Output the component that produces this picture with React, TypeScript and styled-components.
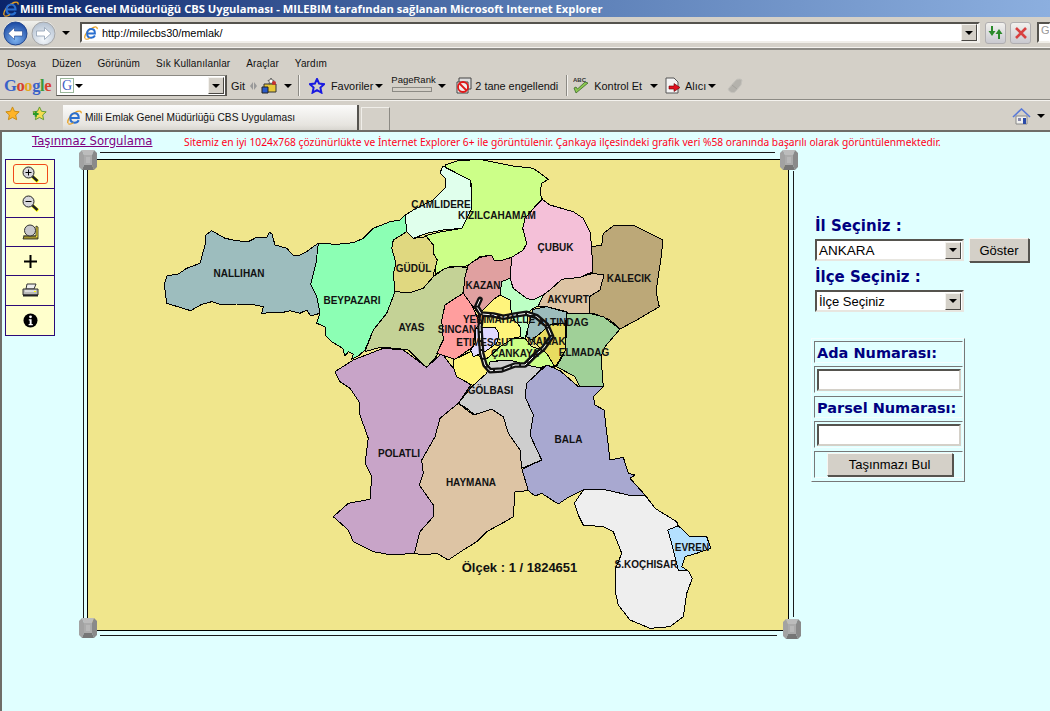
import React from "react";
import styled, { createGlobalStyle } from "styled-components";

const Global = createGlobalStyle`
  html, body { margin: 0; padding: 0; height: 100%; overflow: hidden; background: #d4d0c8; }
  #root { height: 100%; }
  * { box-sizing: border-box; }
`;

const Screen = styled.div`
  width: 1050px; height: 711px; display: flex; flex-direction: column; overflow: hidden;
  font-family: "Liberation Sans", Arial, sans-serif; background: #d4d0c8;
`;
const TitleBar = styled.div`
  height: 17px; display: flex; align-items: center; gap: 1px; padding-left: 3px; flex: none;
  background: linear-gradient(90deg, #0a246a 0%, #5a7db5 52%, #8cafdf 100%);
  color: #fff; font: bold 11.2px "Open Sans", sans-serif; white-space: nowrap;
`;
const AddressRow = styled.div`
  height: 33px; flex: none; display: flex; align-items: center; padding: 0 0 0 3px;
  border-bottom: 2px solid #8c8a84; box-shadow: inset 0 -1px 0 #f4f2ee;
`;
const NavGroup = styled.div`
  width: 53px; height: 25px; margin-top: 2px; flex: none; display: flex; align-items: center; justify-content: space-between;
  border-radius: 13px; background: linear-gradient(#f0f0ec, #c4c2bc);
`;
const Caret = styled.span<{ $ml?: number; $color?: string }>`
  display: inline-block; flex: none; width: 0; height: 0; margin-left: ${p => p.$ml ?? 0}px;
  border-left: 4px solid transparent; border-right: 4px solid transparent;
  border-top: 4px solid ${p => p.$color ?? "#000"};
`;
const AddressBox = styled.div`
  width: 900px; height: 21px; margin-left: 10px; display: flex; align-items: center; flex: none;
  background: #fff; border: 2px solid; border-color: #55534e #f0eee9 #f0eee9 #55534e; padding-left: 2px;
  font-size: 10.9px; color: #000; position: relative;
`;
const AddressText = styled.span` margin-left: 4px; flex: 1; `;
const DropBtn = styled.span`
  width: 16px; height: 17px; flex: none; display: flex; align-items: center; justify-content: center;
  background: #d4d0c8; border: 1px solid; border-color: #f4f2ee #4a4844 #4a4844 #f4f2ee; margin-right: 1px;
`;
const GoBtn = styled.div<{ $ml: number }>`
  width: 21px; height: 22px; margin-left: ${p => p.$ml}px; flex: none; border-radius: 3px;
  display: flex; align-items: center; justify-content: center;
  background: linear-gradient(#f2f1ee, #c9c9d0); border: 1px solid #b0aeb0;
`;
const SearchStub = styled.div`
  width: 14px; height: 21px; margin-left: 6px; flex: none; background: #fff; overflow: hidden;
  border: 2px solid; border-color: #55534e transparent #f0eee9 #55534e; color: #999; font-size: 11px; padding-left: 2px;
`;
const MenuRow = styled.div`
  height: 20px; flex: none; display: flex; align-items: center; padding: 6px 0 0 7px; gap: 16px;
  font-size: 10px; color: #111; letter-spacing: .12px;
`;
const ToolbarRow = styled.div`
  height: 30px; flex: none; display: flex; align-items: center; padding: 2px 0 0 4px;
  font-size: 10.9px; color: #111; white-space: nowrap;
  border-bottom: 1px solid #8c8a84; box-shadow: 0 1px 0 #f4f2ee;
`;
const GoogleLogo = styled.span`
  font: bold 16.5px "Liberation Serif", serif; letter-spacing: -.4px; width: 52px; flex: none; margin-top: 1px;
`;
const GL = styled.span<{ $c: string }>` color: ${p => p.$c}; `;
const SearchCombo = styled.div`
  width: 171px; height: 21px; flex: none; background: #fff; display: flex; align-items: center; padding-left: 3px;
  border: 1px solid #8c8a84; border-right: 2px solid #55534e; border-bottom-color: #55534e;
`;
const GBox = styled.span`
  width: 14px; height: 15px; flex: none; border: 1px solid #9ab79a; color: #3f5fc4; margin-right: 1px;
  font: 14px/13px "Liberation Serif", serif; text-align: center;
`;
const SearchFill = styled.span` flex: 1; `;
const ToolItem = styled.span<{ $ml?: number; $w?: number }>`
  flex: none; display: inline-flex; align-items: center; margin-left: ${p => p.$ml ?? 0}px;
  ${p => (p.$w ? `width: ${p.$w}px;` : "")}
`;
const Divider = styled.span<{ $ml: number }>`
  width: 2px; height: 21px; flex: none; margin-left: ${p => p.$ml}px;
  border-left: 1px solid #8c8a84; border-right: 1px solid #f4f2ee;
`;
const PageRankBox = styled.span`
  width: 43px; margin-left: 8px; flex: none; display: flex; flex-direction: column; align-items: flex-start;
  font-size: 9.5px; line-height: 10px; margin-top: -5px;
`;
const RankBar = styled.span`
  width: 40px; height: 5px; margin: 2px 0 0 1px; border: 1px solid #8c8a84; background: #d4d0c8;
`;
const TabRow = styled.div`
  height: 30px; flex: none; display: flex; align-items: flex-end; padding-left: 5px; position: relative;
`;
const FavIcons = styled.div`
  width: 58px; height: 26px; flex: none; display: flex; align-items: flex-start; gap: 12px; padding-top: 2px;
`;
const Tab = styled.div`
  width: 296px; height: 25px; flex: none; display: flex; align-items: center; padding-left: 4px; gap: 3px;
  background: linear-gradient(#fbfbfa, #e6e4df 80%, #d8d6d0);
  border-right: 2px solid #55534e; font-size: 10.2px; color: #111; white-space: nowrap;
`;
const NewTab = styled.div`
  width: 29px; height: 23px; margin-left: 2px; flex: none; background: #d4d0c8;
  border: 1px solid #8c8a84; border-top-color: #f0eee9; border-left-color: #f0eee9; border-bottom: none;
`;
const TabTools = styled.div`
  margin-left: auto; height: 26px; display: flex; align-items: center; gap: 6px; padding: 0 5px 2px 0;
`;
const Page = styled.div`
  flex: 1; background: #e0ffff; border-left: 2px solid #6f6d68; border-top: 2px solid #6f6d68;
  display: flex; flex-direction: column; min-height: 0;
`;
const Header = styled.div`
  height: 27px; flex: none; display: flex; align-items: flex-start; padding: 2px 0 0 30px; white-space: nowrap;
`;
const QueryLink = styled.a`
  color: #800080; text-decoration: underline; font: 11.7px "DejaVu Sans", sans-serif; width: 152px; flex: none;
  cursor: pointer;
`;
const Notice = styled.span`
  color: #ff0020; font: 10.26px "Noto Sans", sans-serif; margin-top: 1px;
`;
const Workspace = styled.div` display: flex; align-items: flex-start; `;
const ToolPanel = styled.div`
  width: 50px; margin-left: 3px; flex: none; background: #ffffcc; border: 1px solid #2c0a78;
  display: flex; flex-direction: column;
`;
const ToolCell = styled.div<{ $h: number; $last?: boolean }>`
  height: ${p => p.$h}px; display: flex; align-items: center; justify-content: center;
  ${p => (p.$last ? "" : "border-bottom: 1px solid #2c0a78;")}
`;
const ActiveTool = styled.span`
  width: 35px; height: 20px; display: flex; align-items: center; justify-content: center;
  border: 1px solid #f04a18; border-radius: 3px;
`;
const MapFrame = styled.div`
  position: relative; margin-left: 32px; width: 702px; height: 472px; flex: none;
  background: #f0e68c; border: 1px solid #000;
`;
const MapCanvas = styled.svg` display: block; width: 700px; height: 470px; `;
const FrameLine = styled.span<{ $c: string }>`
  position: absolute; background: #1a1a1a; ${p => p.$c}
`;
const KnobWrap = styled.svg<{ $c: string }>` position: absolute; width: 18px; height: 20px; ${p => p.$c} `;
const SidePanel = styled.div`
  width: 220px; margin-left: 26px; flex: none; padding-top: 56px; display: flex; flex-direction: column;
  color: #000080;
`;
const PickTitle = styled.div`
  font: bold 15px "DejaVu Sans", sans-serif; height: 22px; line-height: 22px; white-space: nowrap;
`;
const PickRow = styled.div` display: flex; align-items: center; gap: 5px; height: 26px; margin-bottom: 3px; `;
const SelectBox = styled.div<{ $fs: number }>`
  width: 149px; height: 22px; flex: none; background: #fff; display: flex; align-items: center; justify-content: space-between;
  border: 2px solid; border-color: #55534e #e8e6e0 #e8e6e0 #55534e; padding-left: 2px;
  font: ${p => p.$fs}px "Liberation Sans", sans-serif; color: #000;
`;
const PlainBtn = styled.button<{ $w: number; $h: number }>`
  width: ${p => p.$w}px; height: ${p => p.$h}px; flex: none; padding: 0; background: #d4d0c8; color: #000;
  border: 1px solid; border-color: #f8f6f2 #55534e #55534e #f8f6f2; box-shadow: 1px 1px 0 #55534e;
  font: 13px "Liberation Sans", sans-serif;
`;
const ParcelTable = styled.div`
  width: 154px; height: 144px; margin: 21px 0 0 -4px; padding: 2px 1px 2px 2px; display: flex; flex-direction: column; gap: 3px;
  border: 1px solid; border-color: #f4fdfd #777 #777 #f4fdfd;
`;
const ParcelCell = styled.div<{ $h: number; $center?: boolean }>`
  height: ${p => p.$h}px; flex: none; display: flex; align-items: center; padding-left: 2px;
  ${p => (p.$center ? "justify-content: center;" : "")}
  border: 1px solid; border-color: #777 #f4fdfd #f4fdfd #777;
`;
const ParcelLabel = styled(ParcelCell)`
  padding-top: 2px; font: bold 14.5px "DejaVu Sans", sans-serif; white-space: nowrap;
`;
const ParcelInput = styled.input`
  width: 144px; height: 22px; padding: 0; background: #fff;
  border: 2px solid; border-color: #55534e #d4d0c8 #d4d0c8 #55534e;
`;

const at = (ox: number, oy: number, s: string) =>
  s.trim().split(/\s+/).map(p => {
    const [x, y] = p.split(",").map(Number);
    return `${(ox + x / 3).toFixed(1)},${(oy + y / 3).toFixed(1)}`;
  }).join(" ");

const Z5: [number, number] = [150, 150];
const Z6: [number, number] = [400, 150];
const Z7: [number, number] = [320, 340];

const regions: { f: string; o: [number, number]; p: string }[] = [
  { f: "#ccff88", o: Z6, p: "135,45 170,33 240,28 340,48 400,55 445,88 425,100 420,130 427,148 405,170 375,205 368,235 380,280 370,300 335,322 300,333 280,330 275,315 240,320 205,345 195,350 150,350 105,372 105,345 95,320 100,295 75,257 125,245 185,235 215,175 215,100 135,70" },
  { f: "#e0ffec", o: Z5, p: "766,195 790,180 850,150 888,110 885,85 870,70 878,48 960,90 966,130 965,175 935,235 880,240 830,250 790,265 770,245" },
  { f: "#9dbdbe", o: Z5, p: "505,280 490,290 470,305 450,315 430,316 410,295 375,285 365,250 358,248 350,262 320,262 295,275 260,272 225,265 185,242 168,255 165,285 150,340 110,355 85,372 50,378 43,405 50,460 122,482 155,463 185,455 215,465 260,462 300,462 340,470 335,490 360,488 395,488 420,482 450,490 470,480 482,498 510,490 510,440 482,403 498,340" },
  { f: "#8cffb4", o: Z5, p: "505,280 560,283 610,278 640,265 670,235 720,215 750,210 766,195 770,245 730,270 725,295 738,340 730,370 735,425 710,490 670,540 645,600 625,618 605,628 610,612 595,605 585,618 578,595 545,575 525,555 525,530 500,520 510,490 500,440 482,403 498,340" },
  { f: "#e0d880", o: Z5, p: "770,245 790,265 830,260 850,285 850,310 862,330 850,375 855,385 845,395 820,415 780,428 735,425 730,370 738,340 725,295 730,270" },
  { f: "#c4d296", o: Z5, p: "735,425 780,428 820,415 850,380 885,355 920,350 952,352 945,400 935,445 885,480 880,520 885,555 865,610 850,630 830,652 800,625 775,600 735,595 690,592 645,605 670,540 710,490" },
  { f: "#c8a4c8", o: Z7, p: "45,95 100,60 190,25 250,30 320,82 365,40 400,85 452,135 415,190 360,235 345,290 305,360 310,400 298,435 340,495 340,530 300,575 283,640 215,645 160,635 100,605 85,570 40,530 85,490 150,478 155,410 135,370 145,295 118,220 120,190 90,145 60,125" },
  { f: "#ff9e9e", o: Z6, p: "190,430 215,465 240,520 225,540 220,590 165,628 110,610 130,570 125,510 135,465 165,445" },
  { f: "#e0a0a0", o: Z6, p: "205,345 240,322 275,315 282,330 300,333 335,322 335,355 330,385 305,395 300,435 278,450 250,480 235,490 215,465 190,430 195,380" },
  { f: "#f4c0d8", o: Z6, p: "427,148 450,165 520,185 550,205 570,245 575,290 578,365 540,382 485,388 450,420 430,435 400,450 380,445 340,415 330,385 335,322 370,300 380,280 368,235 375,205 405,170" },
  { f: "#bca878", o: Z6, p: "605,285 610,250 640,228 700,225 788,270 785,310 768,425 778,470 710,510 660,537 630,510 580,490 568,490 568,440 600,420 610,375 578,370 575,290" },
  { f: "#ddc4a4", o: Z6, p: "485,388 540,382 578,370 612,375 600,420 568,440 568,490 520,503 500,485 440,470 415,468 430,435 450,420" },
  { f: "#bcffc4", o: Z6, p: "305,395 330,385 340,415 380,445 400,450 430,435 415,468 400,475 380,490 385,530 375,565 360,560 360,530 335,500 330,450 300,435" },
  { f: "#fff47c", o: Z6, p: "235,490 250,480 278,450 300,435 330,450 335,500 360,530 360,560 340,565 300,590 280,610 255,630 240,620 215,603 220,590 225,540 240,520" },
  { f: "#fff47c", o: Z6, p: "160,630 215,603 240,620 255,650 265,665 225,710 170,680 160,650" },
  { f: "#e0d8ff", o: Z6, p: "225,535 285,532 297,550 290,580 255,605 220,620 212,600 225,580" },
  { f: "#ccff88", o: Z6, p: "300,590 340,565 375,565 395,590 425,600 440,610 465,652 440,645 420,655 375,648 330,640 290,630 270,660 255,630 280,610" },
  { f: "#9cbcbc", o: Z6, p: "400,478 440,470 500,487 497,520 460,520 415,555 395,570 380,560 385,530" },
  { f: "#e8dc60", o: Z6, p: "415,555 450,525 497,520 497,600 465,652 440,610 425,600 395,570" },
  { f: "#a0d098", o: Z6, p: "500,490 568,490 610,500 660,537 615,590 603,620 610,710 540,712 525,680 470,650 497,600" },
  { f: "#cecece", o: Z7, p: "415,190 455,140 500,100 510,65 570,60 620,75 665,85 630,125 615,170 640,225 630,285 665,360 605,385 600,330 565,280 550,230 515,208 465,225 440,205" },
  { f: "#a8a8d0", o: Z7, p: "620,130 680,75 720,92 775,140 850,140 820,170 825,195 852,210 870,360 910,352 925,400 945,405 930,415 975,465 925,465 850,450 790,450 745,472 715,492 665,460 645,468 625,452 602,390 665,360 630,285 640,225 615,170" },
  { f: "#ddc4a4", o: Z7, p: "415,190 460,225 515,208 550,230 565,280 600,330 605,385 625,452 585,455 580,530 555,545 500,575 470,605 430,630 385,660 350,640 310,645 283,640 300,575 340,530 340,495 298,435 310,400 305,360 345,290 360,235" },
  { f: "#eeeeee", o: Z7, p: "790,450 850,448 925,465 975,465 1005,505 1070,545 1075,557 1043,570 1055,610 1075,690 1105,693 1117,715 1100,760 1090,830 1050,860 990,865 930,840 895,795 885,750 885,690 905,640 880,575 850,560 790,555 775,525 763,490" },
  { f: "#b4e0ff", o: Z7, p: "1075,557 1110,590 1160,590 1172,625 1130,640 1095,650 1085,680 1105,693 1075,690 1055,610 1043,570" },
];

const road = at(440, 290, "120,28 110,50 125,75 120,110 122,150 125,190 135,225 150,242 185,240 225,225 255,225 280,200 310,175 335,140 320,105 290,80 260,70 225,75 190,82 160,75 125,72");

const labels: [string, number, number][] = [
  ["ÇAMLIDERE", 441, 208], ["KIZILCAHAMAM", 497, 219], ["ÇUBUK", 555.5, 251], ["NALLIHAN", 239, 277],
  ["GÜDÜL", 413.5, 272], ["KALECIK", 629, 282], ["KAZAN", 483, 289], ["AKYURT", 568, 303],
  ["BEYPAZARI", 352, 304], ["ALTINDAG", 563, 326], ["YENIMAHALLE", 499, 323], ["AYAS", 411.5, 331],
  ["SINCAN", 457, 333], ["ETIMESGUT", 485.5, 346], ["MAMAK", 546.5, 345], ["ÇANKAYA", 515, 357],
  ["ELMADAG", 584, 356], ["GÖLBASI", 490.5, 394], ["BALA", 568.5, 443], ["POLATLI", 399, 457],
  ["HAYMANA", 471, 486], ["S.KOÇHISAR", 646, 568], ["EVREN", 692, 551],
];

const IELogo = ({ s = 16 }: { s?: number }) => (
  <svg width={s} height={s} viewBox="0 0 16 16" style={{ flex: "none" }}>
    <path d="M1 14C0 11 4 4 11 1.500c3-1 4.500 0 4 2" fill="none" stroke="#e8a020" strokeWidth="1.4" />
    <path d="M4.500 8.500h8c0-3-1.800-5-4.200-5S3.500 5.500 3.500 8.500s2 5 4.800 5c2 0 3.400-1 4.200-2.600" fill="none" stroke="#2a6fd0" strokeWidth="2.2" />
    <path d="M1 14.500c1.500 1 4 .5 6-1" fill="none" stroke="#e8a020" strokeWidth="1.2" />
  </svg>
);
const NavCircle = ({ on }: { on: boolean }) => (
  <svg width="25" height="25" viewBox="0 0 25 25" style={{ flex: "none" }}>
    <defs>
      <radialGradient id={on ? "nb" : "nf"} cx=".5" cy=".75" r=".8">
        <stop offset="0" stopColor={on ? "#7fb4f0" : "#f4f8fc"} />
        <stop offset="1" stopColor={on ? "#123f9c" : "#aebccd"} />
      </radialGradient>
    </defs>
    <circle cx="12.500" cy="12.500" r="11.500" fill={`url(#${on ? "nb" : "nf"})`} stroke={on ? "#24488f" : "#a6a6a6"} />
    {on
      ? <path d="M5 12.500l6.500-6v3.500h8v5h-8v3.500z" fill="#fff" stroke="#1b3f8c" strokeWidth=".6" />
      : <path d="M20 12.500l-6.500-6v3.500h-8v5h8v3.500z" fill="#fff" stroke="#8fa0b4" strokeWidth=".8" />}
  </svg>
);
const Star = ({ f, st, s = 16, plus }: { f: string; st: string; s?: number; plus?: boolean }) => (
  <svg width={s} height={s} viewBox="0 0 16 16" style={{ flex: "none" }}>
    <path d="M8 1l2.100 4.600 5 .6-3.700 3.400 1 5L8 12.200 3.600 14.600l1-5L.9 6.200l5-.6z" fill={f} stroke={st} strokeWidth={f === "none" ? 2 : 1} />
    {plus && <path d="M1 8.500h6M4 5.500v6" stroke="#2a9a2a" strokeWidth="2.2" />}
  </svg>
);
const Magnifier = ({ mode }: { mode: "+" | "-" }) => (
  <svg width="17" height="17" viewBox="0 0 17 17">
    <path d="M10 10l5.500 5" stroke="#ffff00" strokeWidth="3.400" transform="translate(.6 .8)" />
    <path d="M10 10l5.500 5" stroke="#222" strokeWidth="2.400" />
    <circle cx="6.500" cy="6.500" r="5.500" fill="#d8d8dc" stroke="#222" />
    <path d="M3.500 6.500h6" stroke="#000" />
    {mode === "+" && <path d="M6.500 3.500v6" stroke="#000" />}
  </svg>
);
const MapFind = () => (
  <svg width="17" height="17" viewBox="0 0 17 17">
    <path d="M1 15h15V3l-2-1v10H2z" fill="#f5e03a" stroke="#222" strokeWidth=".8" />
    <path d="M1 12h13M1 14h15" stroke="#222" strokeWidth=".8" />
    <circle cx="8" cy="6.500" r="5.500" fill="#c8c8cc" stroke="#333" />
  </svg>
);
const Printer = () => (
  <svg width="17" height="15" viewBox="0 0 17 15">
    <path d="M5 1h9l-2 5H4z" fill="#eee" stroke="#333" />
    <path d="M1 6h15v6H1z" fill="#b8b8b8" stroke="#333" />
    <path d="M1 12.500h15" stroke="#222" strokeWidth="2" />
    <path d="M3 8h11" stroke="#fff" />
    <path d="M12 8.500h2" stroke="#ff0" />
  </svg>
);
const InfoDot = () => (
  <svg width="15" height="15" viewBox="0 0 15 15">
    <circle cx="7.500" cy="7.500" r="7" fill="#000" />
    <circle cx="7.500" cy="3.800" r="1.400" fill="#fff" />
    <path d="M5.800 6.300h2.800v4.600h1.200v1.300H5.600v-1.300h1.100V7.600H5.800z" fill="#fff" />
  </svg>
);
const Knob = ({ c }: { c: string }) => (
  <KnobWrap $c={c} viewBox="0 0 18 20">
    <path d="M3 0h12l-2 5H5z" fill="#bcbcbc" />
    <path d="M0 3l3-3 2 5v10l-2 5-3-3z" fill="#a2a2a2" />
    <path d="M15 0l3 3v14l-3 3-2-5V5z" fill="#8a8a8a" />
    <path d="M3 20h12l-2-5H5z" fill="#767676" />
    <path d="M5 5h8v10H5z" fill="#ababab" />
    <path d="M7 7h4v6H7z" fill="#b8b8b8" />
  </KnobWrap>
);

export default function App() {
  return (
    <Screen>
      <Global />
      <TitleBar>
        <IELogo s={16} />
        <span>Milli Emlak Genel Müdürlüğü CBS Uygulaması - MILEBIM tarafından sağlanan Microsoft Internet Explorer</span>
      </TitleBar>
      <AddressRow>
        <NavGroup>
          <NavCircle on />
          <NavCircle on={false} />
        </NavGroup>
        <Caret $ml={6} />
        <AddressBox>
          <IELogo s={14} />
          <AddressText>http://milecbs30/memlak/</AddressText>
          <DropBtn><Caret /></DropBtn>
        </AddressBox>
        <GoBtn $ml={5}>
          <svg width="15" height="13" viewBox="0 0 15 13">
            <path d="M5 0v5h2.500L4 10 .5 5H3V0zM10 13V8H7.500L11 3l3.500 5H12v5z" fill="#2a8a2a" />
          </svg>
        </GoBtn>
        <GoBtn $ml={4}>
          <svg width="12" height="12" viewBox="0 0 12 12"><path d="M1 1l10 10M11 1L1 11" stroke="#d84040" strokeWidth="2.600" /></svg>
        </GoBtn>
        <SearchStub>G</SearchStub>
      </AddressRow>
      <MenuRow>
        {["Dosya", "Düzen", "Görünüm", "Sık Kullanılanlar", "Araçlar", "Yardım"].map(m => <span key={m}>{m}</span>)}
      </MenuRow>
      <ToolbarRow>
        <GoogleLogo>
          <GL $c="#3a62c8">G</GL><GL $c="#d8402c">o</GL><GL $c="#e4a820">o</GL><GL $c="#3a62c8">g</GL><GL $c="#3a9a3a">l</GL><GL $c="#d8402c">e</GL>
        </GoogleLogo>
        <SearchCombo>
          <GBox>G</GBox>
          <Caret />
          <SearchFill />
          <DropBtn><Caret /></DropBtn>
        </SearchCombo>
        <ToolItem $ml={4}>Git</ToolItem>
        <ToolItem $ml={4}>
          <svg width="9" height="16" viewBox="0 0 9 16"><path d="M4 4L1 8l3 4zM5 4l3 4-3 4z" fill="#999" /></svg>
        </ToolItem>
        <ToolItem $ml={3}>
          <svg width="17" height="17" viewBox="0 0 17 17">
            <path d="M3 7h12v8H3z" fill="#e8c838" stroke="#333" />
            <path d="M1 10h6v6H1z" fill="#2a5ac8" stroke="#222" />
            <path d="M10 1l1 2 2 .5-1.500 1.500.5 2-2-1-2 1 .5-2L7 3.500 9 3z" fill="#fff" stroke="#333" strokeWidth=".7" />
            <circle cx="13" cy="6" r="2" fill="#c83030" />
          </svg>
        </ToolItem>
        <Caret $ml={6} />
        <Divider $ml={6} />
        <ToolItem $ml={9}><Star f="none" st="#1a1ae0" s={16} /></ToolItem>
        <ToolItem $ml={6}>Favoriler</ToolItem>
        <Caret $ml={2} />
        <PageRankBox><span>PageRank</span><RankBar /></PageRankBox>
        <Caret $ml={4} />
        <ToolItem $ml={10}>
          <svg width="16" height="17" viewBox="0 0 16 17">
            <path d="M3 1h12v11H3z" fill="#ddd" stroke="#444" />
            <path d="M1 5h11v11H1z" fill="#eee" stroke="#444" />
            <circle cx="7" cy="10" r="5" fill="none" stroke="#e01818" strokeWidth="1.800" />
            <path d="M3.500 6.500l7 7" stroke="#e01818" strokeWidth="1.800" />
          </svg>
        </ToolItem>
        <ToolItem $ml={3}>2 tane engellendi</ToolItem>
        <Divider $ml={8} />
        <ToolItem $ml={5}>
          <svg width="18" height="19" viewBox="0 0 18 19">
            <path d="M3 17l-2-5 2-1 1.500 2L12 6l3 1z" fill="#8cc850" stroke="#3a6a2a" strokeWidth=".8" />
            <text x="0" y="6" fontSize="6" fontWeight="bold" fontFamily="Liberation Sans" fill="#333">ABC</text>
          </svg>
        </ToolItem>
        <ToolItem $ml={3}>Kontrol Et</ToolItem>
        <Caret $ml={8} />
        <ToolItem $ml={7}>
          <svg width="16" height="17" viewBox="0 0 16 17">
            <path d="M1 1h8l4 4v11H1z" fill="#f4f4f4" stroke="#555" />
            <path d="M4 9h5V6.500L15 10.500l-6 4V12H4z" fill="#e01020" stroke="#600" strokeWidth=".6" />
          </svg>
        </ToolItem>
        <ToolItem $ml={4}>Alıcı</ToolItem>
        <Caret $ml={2} />
        <ToolItem $ml={11}>
          <svg width="16" height="16" viewBox="0 0 16 16">
            <path d="M1 11L9 2c2-1.500 5-1 6 0l-1 5-6 7c-2 1-5 1-7-3z" fill="#b4b2ac" stroke="#c4c2bc" />
            <path d="M5 7l5 4" stroke="#a4a29c" />
          </svg>
        </ToolItem>
      </ToolbarRow>
      <TabRow>
        <FavIcons>
          <Star f="#ffb428" st="#c88a10" s={15} />
          <Star f="#f4dc50" st="#5a9a30" s={15} plus />
        </FavIcons>
        <Tab>
          <IELogo s={15} />
          <span>Milli Emlak Genel Müdürlüğü CBS Uygulaması</span>
        </Tab>
        <NewTab />
        <TabTools>
          <svg width="19" height="17" viewBox="0 0 19 17">
            <path d="M1 9l8.500-8L18 9" fill="none" stroke="#5a7ad8" strokeWidth="1.600" />
            <path d="M4 8h11v8H4z" fill="#f0f0ee" stroke="#888" />
            <path d="M11 10h3v6h-3z" fill="#2a4aa8" />
            <path d="M6 10h3v3H6z" fill="#88a" />
          </svg>
          <Caret />
        </TabTools>
      </TabRow>
      <Page>
        <Header>
          <QueryLink>Taşınmaz Sorgulama</QueryLink>
          <Notice>Sitemiz en iyi 1024x768 çözünürlükte ve İnternet Explorer 6+ ile görüntülenir. Çankaya ilçesindeki grafik veri %58 oranında başarılı olarak görüntülenmektedir.</Notice>
        </Header>
        <Workspace>
          <ToolPanel>
            <ToolCell $h={29}><ActiveTool><Magnifier mode="+" /></ActiveTool></ToolCell>
            <ToolCell $h={29}><Magnifier mode="-" /></ToolCell>
            <ToolCell $h={29}><MapFind /></ToolCell>
            <ToolCell $h={29}>
              <svg width="13" height="13" viewBox="0 0 13 13"><path d="M6.500 0v13M0 6.500h13" stroke="#000" strokeWidth="2" /></svg>
            </ToolCell>
            <ToolCell $h={30}><Printer /></ToolCell>
            <ToolCell $h={29} $last><InfoDot /></ToolCell>
          </ToolPanel>
          <MapFrame>
            <MapCanvas viewBox="88 160 700 470">
              <g stroke="#000" strokeWidth="1" shapeRendering="crispEdges" strokeLinejoin="round">
                {regions.map((r, i) => (
                  <polygon key={i} points={at(r.o[0], r.o[1], r.p)} fill={r.f} />
                ))}
              </g>
              <polyline points={road} fill="none" stroke="#111" strokeWidth="5.500" strokeLinejoin="round" strokeLinecap="round" />
              <polyline points={road} fill="none" stroke="#fff" strokeWidth="1" strokeLinejoin="round" strokeDasharray="7 2" />
              <g fontFamily="Liberation Sans, Arial, sans-serif" fontWeight="bold" fontSize="10" fill="#111" textAnchor="middle">
                {labels.map(([t, x, y]) => <text key={t} x={x} y={y}>{t}</text>)}
                <text x="519.500" y="572" fontSize="13">Ölçek : 1 / 1824651</text>
              </g>
            </MapCanvas>
            <FrameLine $c="left: 12px; top: -8px; width: 675px; height: 1px;" />
            <FrameLine $c="left: -5px; top: 9px; width: 1px; height: 450px;" />
            <FrameLine $c="right: -6px; top: 11px; width: 1px; height: 446px;" />
            <FrameLine $c="left: 12px; bottom: -6px; width: 677px; height: 1px;" />
            <Knob c="left: -9px; top: -10px;" />
            <Knob c="right: -10px; top: -10px;" />
            <Knob c="left: -9px; bottom: -8px;" />
            <Knob c="right: -13px; bottom: -9px;" />
          </MapFrame>
          <SidePanel>
            <PickTitle>İl Seçiniz :</PickTitle>
            <PickRow>
              <SelectBox $fs={13.5}>ANKARA<DropBtn><Caret /></DropBtn></SelectBox>
              <PlainBtn $w={60} $h={24}>Göster</PlainBtn>
            </PickRow>
            <PickTitle>İlçe Seçiniz :</PickTitle>
            <PickRow>
              <SelectBox $fs={13}>İlçe Seçiniz<DropBtn><Caret /></DropBtn></SelectBox>
            </PickRow>
            <ParcelTable>
              <ParcelLabel $h={22}>Ada Numarası:</ParcelLabel>
              <ParcelCell $h={27}><ParcelInput /></ParcelCell>
              <ParcelLabel $h={22}>Parsel Numarası:</ParcelLabel>
              <ParcelCell $h={27}><ParcelInput /></ParcelCell>
              <ParcelCell $h={27} $center><PlainBtn $w={126} $h={23}>Taşınmazı Bul</PlainBtn></ParcelCell>
            </ParcelTable>
          </SidePanel>
        </Workspace>
      </Page>
    </Screen>
  );
}
